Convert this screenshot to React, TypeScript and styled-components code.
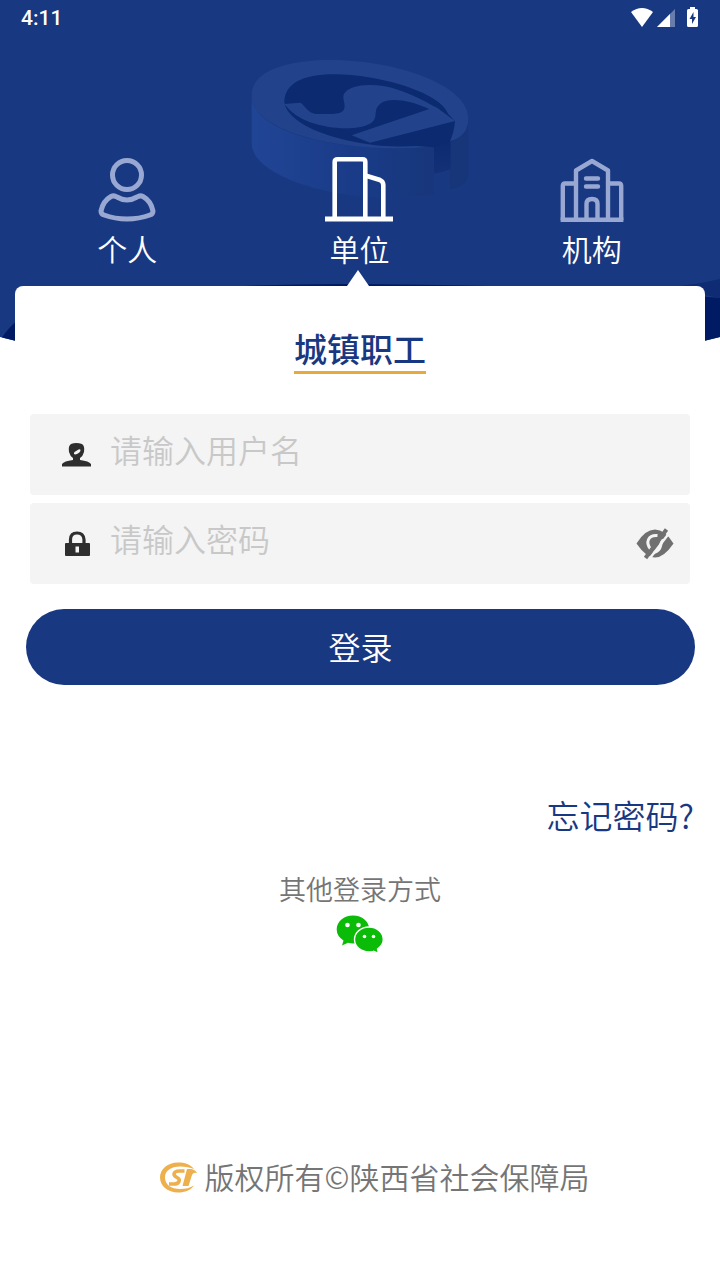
import React from "react";
import styled, { createGlobalStyle, css } from "styled-components";

const NAVY = "#193882";

const GlobalStyle = createGlobalStyle`
  *, *::before, *::after { box-sizing: border-box; }
  body {
    margin: 0;
    background: #fff;
    font-family: "Noto Sans CJK SC", sans-serif;
    font-weight: 350;
  }
  button, input { font: inherit; }
`;

const Page = styled.div`
  position: relative;
  display: flex;
  flex-direction: column;
  min-height: 100vh;
  background: #fff;
`;

const BackdropArt = styled.svg`
  position: absolute;
  top: 0;
  left: 0;
  width: 100%;
  height: 350px;
`;

const StatusBar = styled.header`
  position: relative;
  display: flex;
  align-items: center;
  justify-content: space-between;
  height: 36px;
  padding: 0 20px 0 21px;
  color: #fff;
  font: 500 21px/36px Roboto, sans-serif;
`;

const Tabs = styled.nav`
  position: relative;
  display: grid;
  grid-template-columns: repeat(3, 1fr);
  padding: 118px 12px 0 11px;
`;

const Tab = styled.button<{ $active?: boolean }>`
  position: relative;
  display: flex;
  flex-direction: column;
  align-items: center;
  gap: 4px;
  padding: 0 0 20px;
  border: 0;
  background: none;
  color: #fff;
  font-size: 30px;
  line-height: 36px;
  cursor: pointer;

  svg {
    color: ${(p) => (p.$active ? "#fff" : "#98a8d2")};
  }

  ${(p) =>
    p.$active &&
    css`
      &::after {
        content: "";
        position: absolute;
        bottom: 0;
        left: calc(50% - 12px);
        border: solid transparent;
        border-width: 0 11px 16px;
        border-bottom-color: #fff;
      }
    `}
`;

const LoginForm = styled.form`
  position: relative;
  display: flex;
  flex-direction: column;
`;

const Card = styled.section`
  display: flex;
  flex-direction: column;
  align-items: center;
  margin: 0 15px;
  padding: 44px 15px 0;
  border-radius: 8px;
  background: #fff;
`;

const Title = styled.h1`
  margin: 0 0 40px;
  padding-bottom: 5px;
  border-bottom: 3px solid #e8a93c;
  color: ${NAVY};
  font-size: 33px;
  font-weight: 500;
  line-height: 36px;
`;

const Fields = styled.div`
  display: grid;
  gap: 8px;
  width: 100%;
`;

const Field = styled.div`
  display: flex;
  align-items: center;
  height: 81px;
  padding: 0 16px 0 32px;
  border-radius: 4px;
  background: #f4f4f4;
`;

const FieldLabel = styled.label`
  display: flex;
  width: 48px;
`;

const TextInput = styled.input`
  flex: 1;
  min-width: 0;
  height: 100%;
  padding: 0 0 12px;
  border: 0;
  outline: 0;
  background: none;
  color: #333;
  font-size: 32px;

  &::placeholder {
    color: #c8c8c8;
    opacity: 1;
  }
`;

const IconButton = styled.button`
  display: flex;
  padding: 0;
  border: 0;
  background: none;
  cursor: pointer;
`;

const SubmitButton = styled.button`
  height: 76px;
  margin: 25px 25px 0 26px;
  padding: 0 0 2px;
  border: 0;
  border-radius: 38px;
  background: ${NAVY};
  color: #fff;
  font-size: 32px;
  cursor: pointer;
`;

const ForgotLink = styled.a`
  align-self: flex-end;
  margin: 110px 26px 0 0;
  color: ${NAVY};
  font-size: 33px;
  line-height: 40px;
  text-decoration: none;
`;

const OtherLogin = styled.section`
  display: flex;
  flex-direction: column;
  align-items: center;
  gap: 7px;
  margin-top: 36px;
`;

const OtherTitle = styled.h2`
  margin: 0;
  color: #757575;
  font-size: 27px;
  font-weight: inherit;
  line-height: 36px;
`;

const Footer = styled.footer`
  display: flex;
  align-items: center;
  justify-content: center;
  gap: 7px;
  margin-top: auto;
  padding: 40px 0 82px 29px;
  color: #757575;
  font-size: 30px;
  line-height: 36px;
`;

const Copyright = styled.span`
  padding-bottom: 4px;
`;

const Backdrop = () => (
  <BackdropArt viewBox="0 0 720 350" preserveAspectRatio="xMidYMin slice" aria-hidden="true">
    <defs>
      <linearGradient id="rim" x1="0" x2="1" y1="0" y2="0">
        <stop offset="0" stopColor="#214595" />
        <stop offset="0.5" stopColor="#1a3c89" />
        <stop offset="1" stopColor="#17367b" />
      </linearGradient>
      <linearGradient id="gap" x1="0" x2="0" y1="0" y2="1">
        <stop offset="0" stopColor="#0c2a70" />
        <stop offset="1" stopColor="#143177" />
      </linearGradient>
      <clipPath id="hero">
        <path d="M0 0H720V337Q540 383 360 383T0 337Z" />
      </clipPath>
    </defs>
    <g clipPath="url(#hero)">
      <rect width="720" height="350" fill={NAVY} />
      <path d="M0 341Q14 314 60 300Q200 284 340 284T650 292L720 298V350H0Z" fill="#001a63" />
      <path d="M680 286Q700 284 720 279V298L700 294Z" fill="#0f2b73" />
    </g>
    <g transform="translate(230 40) scale(0.3333)">
      <path d="M65 165C65 290 380 345 612 318V462C380 505 65 420 65 310Z" fill="url(#rim)" />
      <path d="M660 303C695 295 715 272 715 235V405C712 430 690 444 660 447Z" fill="#173679" />
      <path d="M612 310L662 295V388Q640 397 612 401Z" fill="url(#gap)" />
      <path
        d="M65 165C65 90 180 60 300 60C500 60 715 135 715 235C715 272 695 295 660 303L674 245L612 318C400 345 65 290 65 165Z"
        fill="#22438c"
      />
      <path
        d="M163 185C165 130 220 103 310 103C450 103 632 158 655 222L675 244Q672 280 660 303L612 322L560 318C380 330 170 265 163 185Z"
        fill="#0c2a70"
      />
      <path
        d="M163 192L212 188C228 202 238 222 262 222H310C368 218 332 180 342 162C356 138 405 130 460 138C520 148 572 178 622 204L675 243L420 308L365 286L598 207C540 180 480 172 455 188C422 210 452 234 418 252C380 272 300 268 240 247Q190 228 163 192Z"
        fill="#22438c"
      />
    </g>
  </BackdropArt>
);

const StatusIcons = () => (
  <svg width="70" height="24" viewBox="0 0 70 24" fill="#fff" role="img" aria-label="Wi-Fi, 信号, 电池">
    <path d="M1 6Q12 -2 23 6L12 21Z" />
    <path d="M45 3V21H27Z" opacity="0.35" />
    <path d="M40 8V21H27Z" />
    <path
      fillRule="evenodd"
      d="M60 1H65V3H66.500Q68 3 68 4.500V19.500Q68 21 66.500 21H58.500Q57 21 57 19.500V4.500Q57 3 58.500 3H60ZM63.500 6L59.500 13H62V18L66 11H63.500Z"
    />
  </svg>
);

const PersonIcon = () => (
  <svg width="72" height="72" viewBox="0 0 72 72" fill="none" stroke="currentColor" strokeWidth="5" aria-hidden="true">
    <circle cx="36" cy="21" r="14.500" />
    <path
      d="M20 42.500Q23 41 26 43Q36 49 46 43Q49 41 52 42.500Q60 47 62 57Q62 60 59 61Q48 65 36 65T13 61Q10 60 10 57Q12 47 20 42.500Z"
      strokeLinejoin="round"
    />
  </svg>
);

const CompanyIcon = () => (
  <svg width="72" height="72" viewBox="0 0 72 72" fill="none" stroke="currentColor" strokeWidth="4.600" aria-hidden="true">
    <path d="M11.700 65V8Q11.700 5.300 14.500 5.300H39.500Q42.300 5.300 42.300 8V65M42.300 21.500L57 26Q60.300 27.500 60.300 31V65" />
    <path d="M2 65H70" strokeWidth="5" />
  </svg>
);

const InstitutionIcon = () => (
  <svg width="72" height="72" viewBox="0 0 72 72" fill="none" stroke="currentColor" strokeWidth="4.400" strokeLinejoin="round" aria-hidden="true">
    <path d="M20 66V16.500L36 7L52 16.500V66M20 29.500H9Q6.800 29.500 6.800 32V66M52 29.500H63Q65.200 29.500 65.200 32V66" />
    <path d="M4.600 65.800H67.400M30.500 66V50Q30.500 45 36 45T41.500 50V66" />
    <path d="M30 24.500H42M30 32.500H42" strokeLinecap="round" />
  </svg>
);

const UserIcon = () => (
  <svg width="30" height="26" viewBox="0 0 30 26" fill="#2e2e2e" aria-hidden="true">
    <path
      fillRule="evenodd"
      d="M9 2Q14 0 20 2Q23 4 22 10Q21 14 18 16V18Q27 19 29 22V24.500H0V22Q2 19 11 18V16Q8 14 7 10Q6 4 9 2ZM12.500 10Q11 12.500 13.500 12.500Q18 11 18.500 8.500Q18.500 6.500 16.500 7.500Z"
    />
  </svg>
);

const LockIcon = () => (
  <svg width="30" height="26" viewBox="0 0 30 26" aria-hidden="true">
    <path d="M8.500 13V8.500Q8.500 2 15 2T22 8.500V13" fill="none" stroke="#2e2e2e" strokeWidth="3.200" />
    <path
      fillRule="evenodd"
      fill="#2e2e2e"
      d="M4 12H27Q28 12 28 13V24Q28 25 27 25H4Q3 25 3 24V13Q3 12 4 12ZM13.500 15.500V21.500H17V15.500Z"
    />
  </svg>
);

const EyeOffIcon = () => (
  <svg width="38" height="32" viewBox="0 0 38 32" aria-hidden="true">
    <path d="M0.500 15.500Q9 1.500 19 1.500T37.500 15.500Q28 29.500 19 29.500T0.500 15.500Z" fill="#707070" />
    <path d="M14.500 21Q10.500 16 12.500 11.500T21.500 7.500M18 24.500Q23.500 23 24.500 18T26.500 11" fill="none" stroke="#f4f4f4" strokeWidth="3" />
    <path d="M12.500 32L34 4" stroke="#f4f4f4" strokeWidth="2.500" />
    <path d="M9.500 30L30.500 1.500" stroke="#707070" strokeWidth="4" />
  </svg>
);

const WeChatIcon = () => (
  <svg width="48" height="40" viewBox="0 0 48 40" aria-hidden="true">
    <g fill="#0abb07">
      <path d="M17 1.500C26 1.500 33.300 7.500 33.300 15.500S26 29.500 17 29.500Q14.500 29.500 12 28.800L6 31.500L7.500 26.500Q0.700 22 0.700 15.500C0.700 7.500 8 1.500 17 1.500Z" />
      <path
        d="M33 13C41 13 47.300 18.500 47.300 25.500Q47.300 31 41.500 35L42.500 39.500L37.500 37.300Q35.500 38 33 38C25 38 18.500 32.500 18.500 25.500S25 13 33 13Z"
        stroke="#fff"
        strokeWidth="1.400"
      />
    </g>
    <g fill="#fff">
      <circle cx="11.500" cy="11" r="2.300" />
      <circle cx="22.500" cy="11" r="2.300" />
      <circle cx="28.500" cy="22.500" r="1.800" />
      <circle cx="37.500" cy="22.500" r="1.800" />
    </g>
  </svg>
);

const BureauLogo = () => (
  <svg width="38" height="32" viewBox="0 0 38 32" aria-hidden="true">
    <path
      fill="#edb04c"
      d="M34 7C30 2 25 0.500 18 0.500C8 0.500 0 7 0 15.500S8 30.500 18 30.500C25 30.500 31 28 34 23.500C30 26 26 27 20 27C11 27 5 22.500 5 15.500S11 4.500 20 4.500C26 4.500 30 5.500 34 7Z"
    />
    <path
      fill="none"
      stroke="#edb04c"
      strokeWidth="3.600"
      d="M24.500 9H19.500Q14.500 9 14 12Q14 14 17 15.500Q20 17 19 19.500Q18 22 14 22H9"
    />
    <path fill="#edb04c" d="M27 7H31Q35 7.500 37 11Q33 10 32 13L28.500 24H22.500Z" />
  </svg>
);

export default function App() {
  const [tab, setTab] = React.useState("单位");
  const [showPassword, setShowPassword] = React.useState(false);
  const tabs = [
    { name: "个人", Icon: PersonIcon },
    { name: "单位", Icon: CompanyIcon },
    { name: "机构", Icon: InstitutionIcon },
  ];

  return (
    <Page>
      <GlobalStyle />
      <Backdrop />
      <StatusBar>
        <time>4:11</time>
        <StatusIcons />
      </StatusBar>
      <Tabs>
        {tabs.map(({ name, Icon }) => (
          <Tab key={name} type="button" $active={name === tab} onClick={() => setTab(name)}>
            <Icon />
            {name}
          </Tab>
        ))}
      </Tabs>
      <LoginForm onSubmit={(e) => e.preventDefault()}>
        <Card>
          <Title>城镇职工</Title>
          <Fields>
            <Field>
              <FieldLabel htmlFor="username" aria-label="用户名">
                <UserIcon />
              </FieldLabel>
              <TextInput id="username" type="text" placeholder="请输入用户名" />
            </Field>
            <Field>
              <FieldLabel htmlFor="password" aria-label="密码">
                <LockIcon />
              </FieldLabel>
              <TextInput id="password" type={showPassword ? "text" : "password"} placeholder="请输入密码" />
              <IconButton type="button" aria-label="显示密码" onClick={() => setShowPassword(!showPassword)}>
                <EyeOffIcon />
              </IconButton>
            </Field>
          </Fields>
        </Card>
        <SubmitButton type="submit">登录</SubmitButton>
      </LoginForm>
      <ForgotLink href="#forgot">忘记密码?</ForgotLink>
      <OtherLogin>
        <OtherTitle>其他登录方式</OtherTitle>
        <IconButton type="button" aria-label="微信登录">
          <WeChatIcon />
        </IconButton>
      </OtherLogin>
      <Footer>
        <BureauLogo />
        <Copyright>版权所有©陕西省社会保障局</Copyright>
      </Footer>
    </Page>
  );
}
